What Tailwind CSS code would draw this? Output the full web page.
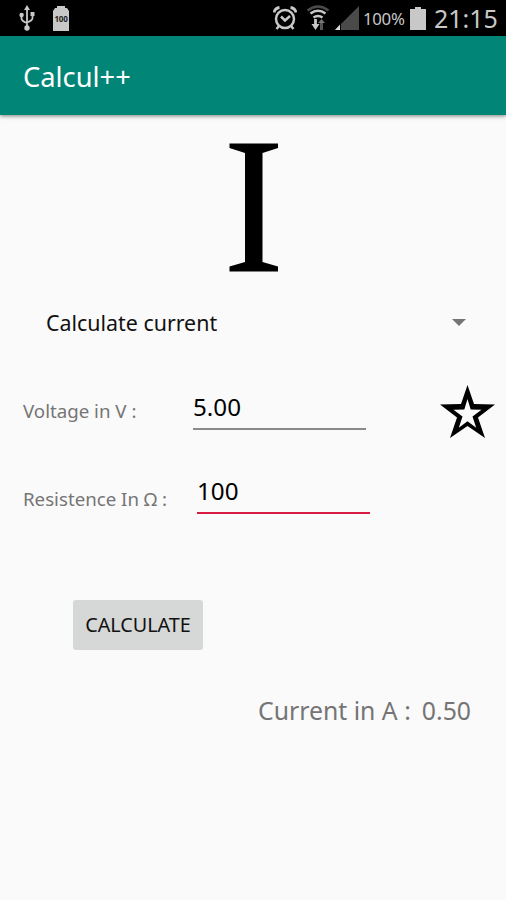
<!DOCTYPE html>
<html lang="en">
<head>
  <meta charset="UTF-8">
  <title>Calcul++</title>
  <script src="https://cdn.jsdelivr.net/npm/@tailwindcss/browser@4"></script>
</head>
<body class="bg-[#fafafa] w-[506px] h-[900px] overflow-hidden font-['Noto_Sans',sans-serif] whitespace-nowrap">

  <!-- Status bar -->
  <div class="bg-black h-9 flex items-center pl-[19px] pr-[9px] text-[#c8c8c8]">
    <svg class="w-4 h-[26px]" viewBox="0 0 16 26" fill="none" stroke="currentColor" stroke-width="1.8">
      <path d="M8 4v18M2.500 10v3.500q0 2.500 5.500 4.500M13.500 9v4q0 2.500-5.500 4.500"/>
      <path d="M8 0l3 5H5zM11.500 7h4v4h-4z" fill="currentColor" stroke="none"/>
      <circle cx="2.600" cy="10" r="2.200" fill="currentColor" stroke="none"/>
      <circle cx="8" cy="23" r="2.700" fill="currentColor" stroke="none"/>
    </svg>
    <div class="relative ml-[18px] w-4 h-[25px]">
      <svg class="w-4 h-[25px]" viewBox="0 0 16 25" fill="currentColor"><path d="M4 0h8v2h2l2 3v20H0V5l2-3h2z"/></svg>
      <span class="absolute inset-x-0 top-[8px] text-center text-[8px] leading-[10px] font-bold text-[#222] -tracking-[0.3px]">100</span>
    </div>
    <div class="ml-auto flex items-center">
      <svg class="w-6 h-6" viewBox="0 0 24 24" fill="none" stroke="currentColor" stroke-width="2.500">
        <circle cx="12" cy="13" r="9"/>
        <path d="M8 10.500l4 4 5-4.500M6 20l-2.500 3M18 20l2.500 3"/>
        <path d="M1 6.500Q2 2 6.500 1.500M23 6.500Q22 2 17.500 1.500" stroke-width="2.800"/>
      </svg>
      <svg class="ml-[9px] w-6 h-[26px]" viewBox="0 0 24 26" fill="none" stroke="currentColor" stroke-width="2.600">
        <path d="M1.500 5.500Q12-2.500 22.500 5.500" stroke="#4a4a4a"/>
        <path d="M4.500 8.500Q12 3 19.500 8.500M7.500 12.500q4.500-3 9 0"/>
        <path d="M9.500 14v6" stroke-width="2.800"/>
        <path d="M5.500 19h8l-4 6z" fill="currentColor" stroke="none"/>
        <path d="M15.500 17v8" stroke="#555" stroke-width="3"/>
        <path d="M12 18l3.500-4 3.500 4z" fill="#777" stroke="none"/>
      </svg>
      <svg class="ml-[5px] w-6 h-6" viewBox="0 0 24 24"><path d="M24 0v24H0z" fill="#4a4a4a"/><path d="M5 18.500V24H0z" fill="#ddd"/><path d="M5.500 18v6" stroke="#000"/></svg>
      <span class="ml-1 w-[42px] text-[16.800px] -tracking-[0.300px] relative top-px">100%</span>
      <svg class="ml-[5px] w-4 h-[23px]" viewBox="0 0 16 23" fill="currentColor"><path d="M5 0h6v2h5v21H0V2h5z"/></svg>
      <span class="ml-[8px] w-[63px] text-[25px] leading-9">21:15</span>
    </div>
  </div>

  <!-- App bar -->
  <header class="bg-[#008577] h-[79px] flex items-center px-[23px] pt-[3px] shadow-[0_1px_4px_rgba(0,0,0,0.5)]">
    <h1 class="text-[27.300px] text-white">Calcul++</h1>
  </header>

  <main class="text-[#757575]">
    <div class="flex justify-center pt-7 pl-[2px]">
      <svg class="w-[50px] h-[129px]" viewBox="0 0 50 129"><path d="M0.500 0.500h48.500v4.500L33.500 10v109l15.500 4.500v5H0.500v-5L16 119V10L0.500 5z"/></svg>
    </div>

    <!-- Formula selector -->
    <div class="mt-[26px] h-12 flex items-center justify-between pl-[46px] pr-10 text-black">
      <span class="text-[21.400px] text-[#111] relative top-px">Calculate current</span>
      <svg class="w-[14px] h-[7px]" viewBox="0 0 14 7" fill="#757575"><path d="M0 0h14L7 7z"/></svg>
    </div>

    <div class="mt-8 h-[66px] flex items-center pl-[23px] pr-[11px]">
      <label class="w-[170px] text-[18.700px]">Voltage in V :</label>
      <div class="w-[173px] h-[50px] border-b-2 border-[#8a8a8a] text-black text-[24.200px] leading-[53px] -mt-3">5.00</div>
      <svg class="ml-auto w-[55px] h-[53px]" viewBox="0 0 55 53"><path d="M27.500 0L34 19l21 .5-17 13 7 20.500-17.500-12L10 53l7-20.500-17-13 21-.5zM27.500 14L24.300 24.500l-10.800.2 9 6.800-3.700 11.200 8.700-6.500 8.700 6.500-3.700-11.200 9-6.800-10.800-.2z" fill-rule="evenodd"/></svg>
    </div>

    <div class="mt-[22px] h-[66px] flex items-center pl-[23px]">
      <label class="w-[174px] text-[18.700px] pt-px">Resistence In Ω :</label>
      <div class="w-[173px] h-[50px] border-b-2 border-[#d81b43] text-black text-[24.200px] leading-[53px] -mt-5">100</div>
    </div>

    <button class="block mt-[68px] ml-[73px] w-[130px] h-[50px] rounded-[3px] bg-[#d6d7d7] text-[#111] text-[19.800px]">CALCULATE</button>

    <p class="mt-[42px] mr-[35px] flex justify-end gap-[11px] text-[24.800px]"><span>Current in A :</span><span>0.50</span></p>
  </main>

</body>
</html>
